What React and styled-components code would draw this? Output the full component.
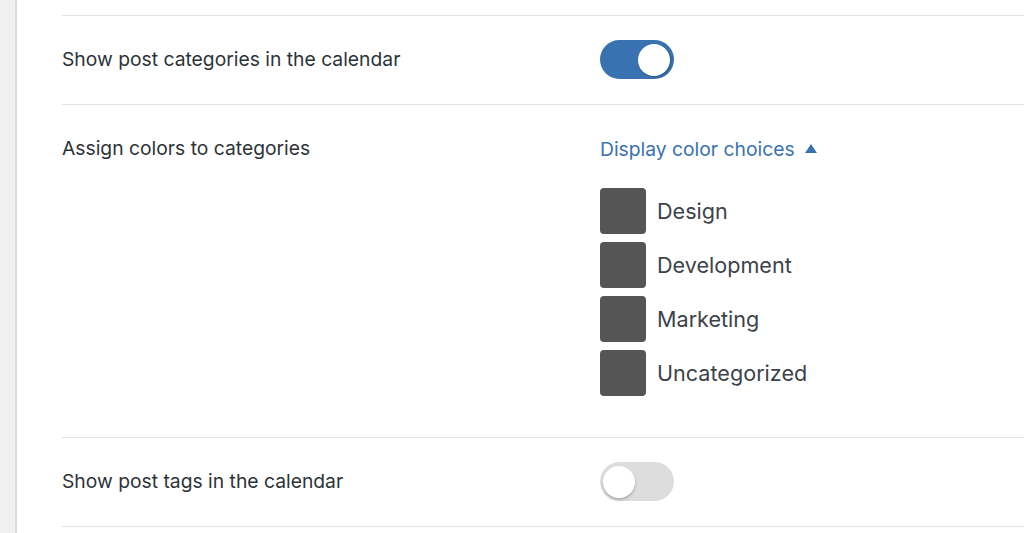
import React, { useState } from "react";
import styled, { createGlobalStyle } from "styled-components";

const Global = createGlobalStyle`
  html, body { margin: 0; padding: 0; background: #fff; }
  body {
    font-family: Inter, "Noto Sans", "Liberation Sans", sans-serif;
    color: #2c3338;
    -webkit-font-smoothing: antialiased;
  }
`;

const Page = styled.div`
  display: flex;
  min-height: 533px;
  overflow: hidden;
`;

const Rail = styled.div`
  width: 15px;
  flex: none;
  background: #f0f0f1;
  border-right: 2px solid #dcdcde;
`;

const Main = styled.main`
  flex: 1;
  padding: 15px 0 0 45px;
`;

const Row = styled.section`
  display: flex;
  align-items: flex-start;
  border-top: 1px solid #e2e2e4;
  padding: 24px 0 ${(p) => p.$bottom || 25}px;
  &:last-child { border-bottom: 1px solid #e2e2e4; }
`;

const Label = styled.div`
  width: 538px;
  flex: none;
  font-size: 19.3px;
  line-height: 39px;
  color: #2c3338;
`;

const Field = styled.div`
  display: flex;
  flex-direction: column;
`;

const Track = styled.button`
  position: relative;
  width: 74px;
  height: 39px;
  border: none;
  border-radius: 20px;
  padding: 0;
  cursor: pointer;
  background: ${(p) => (p.$on ? "#3872b1" : "#dddddd")};
`;

const Knob = styled.span`
  position: absolute;
  top: 3.5px;
  left: ${(p) => (p.$on ? "38px" : "3px")};
  width: 32px;
  height: 32px;
  border-radius: 50%;
  background: #fff;
  box-shadow: ${(p) =>
    p.$on ? "1px 1px 2px rgba(0,0,0,0.25)" : "0 2px 3px rgba(0,0,0,0.22)"};
`;

const Toggle = ({ initial }) => {
  const [on, setOn] = useState(initial);
  return (
    <Track $on={on} onClick={() => setOn(!on)} aria-pressed={on}>
      <Knob $on={on} />
    </Track>
  );
};

const Disclosure = styled.button`
  display: flex;
  align-items: center;
  gap: 10px;
  height: 39px;
  padding: 0;
  border: none;
  background: none;
  cursor: pointer;
  font-family: inherit;
  font-size: 19.3px;
  color: #3872b1;
`;

const Caret = styled.span`
  width: 0;
  height: 0;
  border-left: 6px solid transparent;
  border-right: 6px solid transparent;
  border-bottom: 9px solid #3872b1;
  margin-top: -1px;
`;

const SwatchList = styled.ul`
  list-style: none;
  margin: 20px 0 0;
  padding: 0;
  display: flex;
  flex-direction: column;
  gap: 8px;
`;

const SwatchItem = styled.li`
  display: flex;
  align-items: center;
  gap: 11px;
`;

const Swatch = styled.span`
  width: 46px;
  height: 46px;
  border-radius: 4px;
  background: ${(p) => p.$color};
`;

const SwatchName = styled.span`
  font-size: 21.6px;
  color: #3c434a;
`;

const categories = ["Design", "Development", "Marketing", "Uncategorized"];

export default function App() {
  return (
    <>
      <Global />
      <Page>
        <Rail />
        <Main>
          <Row>
            <Label>Show post categories in the calendar</Label>
            <Toggle initial={true} />
          </Row>
          <Row $bottom={41}>
            <Label>Assign colors to categories</Label>
            <Field>
              <Disclosure>
                Display color choices <Caret />
              </Disclosure>
              <SwatchList>
                {categories.map((c) => (
                  <SwatchItem key={c}>
                    <Swatch $color="#555555" />
                    <SwatchName>{c}</SwatchName>
                  </SwatchItem>
                ))}
              </SwatchList>
            </Field>
          </Row>
          <Row>
            <Label>Show post tags in the calendar</Label>
            <Toggle initial={false} />
          </Row>
        </Main>
      </Page>
    </>
  );
}
